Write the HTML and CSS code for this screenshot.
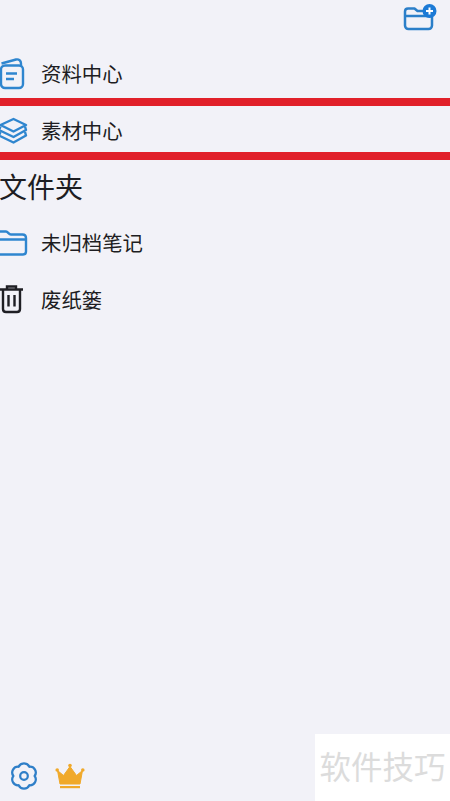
FILE: index.html
```html
<!DOCTYPE html>
<html lang="zh">
<head>
<meta charset="utf-8">
<title>文件夹</title>
<link rel="stylesheet" href="styles.css">
</head>
<body>
<div class="screen">
  <header class="top">
    <svg class="icon-add" width="36" height="30" viewBox="0 0 36 30">
      <path d="M3 14V9.500C3 7.500 4.300 6.500 6 6.500H12.500L15.500 9H24M3 14H30M3 14V23.500C3 25.500 4.500 27 6.500 27H26.500C28.500 27 30 25.500 30 23.500V14" fill="none" stroke="#2b7fc9" stroke-width="2.500" stroke-linejoin="round"/>
      <circle cx="27.500" cy="9" r="7" fill="#1c7ad6"/>
      <path d="M27.500 5.500V12.500M24 9H31" stroke="#fff" stroke-width="2"/>
    </svg>
  </header>
  <div class="row row-first">
    <svg class="icon" width="41" height="34" viewBox="0 0 41 34">
      <path d="M1.500 7.500L16 3.500C19 3 21 4.500 21 7.500V10" fill="none" stroke="#2f86cf" stroke-width="2.400"/>
      <rect x="1" y="9.500" width="22" height="22.500" rx="4" fill="none" stroke="#2f86cf" stroke-width="2.400"/>
      <path d="M6 17.500H17M6 23H14" stroke="#2f86cf" stroke-width="2.400"/>
    </svg>
    <span class="label">资料中心</span>
  </div>
  <div class="marked">
    <div class="row row-marked">
      <svg class="icon" width="41" height="34" viewBox="0 0 41 34">
        <path d="M13.500 7L26 13L13.500 19.500L0.500 13Z" fill="none" stroke="#2f86cf" stroke-width="2.400" stroke-linejoin="round"/>
        <path d="M0.500 14.500L-1 18L13.500 25L26 18L25 14.500" fill="none" stroke="#2f86cf" stroke-width="2.400" stroke-linejoin="round"/>
        <path d="M0.500 20L-1 23.500L13.500 30.500L26 23.500L25 20" fill="none" stroke="#2f86cf" stroke-width="2.400" stroke-linejoin="round"/>
      </svg>
      <span class="label">素材中心</span>
    </div>
  </div>
  <h2 class="title">文件夹</h2>
  <div class="row row-folder">
    <svg class="icon" width="41" height="34" viewBox="0 0 41 34">
      <path d="M-3 13.500H26M-3 5.500H6C8 5.500 8.500 8.500 11 8.500H22.500C25 8.500 26 10 26 12V25.500C26 27.500 25 28.500 23 28.500H-3" fill="none" stroke="#2f86cf" stroke-width="2.400" stroke-linejoin="round"/>
    </svg>
    <span class="label">未归档笔记</span>
  </div>
  <div class="row row-trash">
    <svg class="icon" width="41" height="34" viewBox="0 0 41 34">
      <path d="M0 6.500H23M7 6.500V3.500H16V6.500M3 6.500V26C3 28 4 29 6 29H17C19 29 20 28 20 26V6.500M8.500 12V23.500M14.500 12V23.500" fill="none" stroke="#1f1f24" stroke-width="2.400"/>
    </svg>
    <span class="label">废纸篓</span>
  </div>
  <div class="spacer"></div>
  <footer class="bottom">
    <svg class="icon-gear" width="28" height="28" viewBox="1.500 1.500 25 25">
      <path d="M9.250 5.770A5.200 5.200 0 0 1 18.750 5.770A5.200 5.200 0 0 1 23.500 14A5.200 5.200 0 0 1 18.750 22.230A5.200 5.200 0 0 1 9.250 22.230A5.200 5.200 0 0 1 4.500 14A5.200 5.200 0 0 1 9.250 5.770Z" fill="none" stroke="#2f7fc8" stroke-width="2" stroke-linejoin="round"/>
      <circle cx="14" cy="14" r="3.400" fill="none" stroke="#2f7fc8" stroke-width="2"/>
    </svg>
    <svg class="icon-crown" width="32" height="28" viewBox="0 0 32 28">
      <path d="M3.500 8.500L9.500 13.500L16 4.500L22.500 13.500L28.500 8.500L26 22H6Z" fill="#f0a92a" stroke="#f0a92a" stroke-linejoin="round"/>
      <circle cx="3.200" cy="8" r="1.800" fill="#f0a92a"/>
      <circle cx="16" cy="3.500" r="1.800" fill="#f0a92a"/>
      <circle cx="28.800" cy="8" r="1.800" fill="#f0a92a"/>
      <rect x="6" y="24" width="20" height="2.200" fill="#f0a92a"/>
    </svg>
  </footer>
  <div class="watermark">软件技巧</div>
</div>
</body>
</html>
```
FILE: styles.css
```css
html, body {
  margin: 0;
  padding: 0;
}
body {
  background: #f2f2f8;
  font-family: "Noto Sans CJK SC", "Noto Sans", sans-serif;
  color: #1d1d22;
}
.screen {
  position: relative;
  width: 450px;
  height: 801px;
  display: flex;
  flex-direction: column;
  overflow: hidden;
}
.top {
  height: 47px;
  flex: none;
  display: flex;
  justify-content: flex-end;
  align-items: flex-start;
  padding: 2px 12px 0 0;
  box-sizing: border-box;
}
.row {
  display: flex;
  align-items: center;
  flex: none;
}
.row-first { height: 51px; }
.row-marked { height: 46px; }
.row-folder { height: 56px; }
.row-trash { height: 58px; }
.icon {
  flex: none;
  display: block;
}
.label {
  font-size: 20.400px;
  line-height: 28px;
  font-weight: 400;
}
.row-first .label { padding-top: 1px; }
.row-marked .label { padding-top: 1px; }
.row-folder .label { padding-bottom: 2px; }
.row-trash .label { padding-bottom: 2px; }
.marked {
  border-top: 8px solid #e1202a;
  border-bottom: 8px solid #e1202a;
  flex: none;
}
.title {
  margin: 0 0 0 -1px;
  height: 55px;
  flex: none;
  font-size: 28px;
  line-height: 53px;
  font-weight: 400;
}
.spacer { flex: 1; }
.bottom {
  display: flex;
  align-items: center;
  gap: 16px;
  height: 28px;
  margin: 0 0 11px 10px;
  flex: none;
}
.watermark {
  position: absolute;
  right: 0;
  bottom: 0;
  width: 135px;
  height: 67px;
  background: #ffffff;
  color: #dcdcdc;
  font-size: 31.500px;
  line-height: 62px;
  text-align: center;
}
```
